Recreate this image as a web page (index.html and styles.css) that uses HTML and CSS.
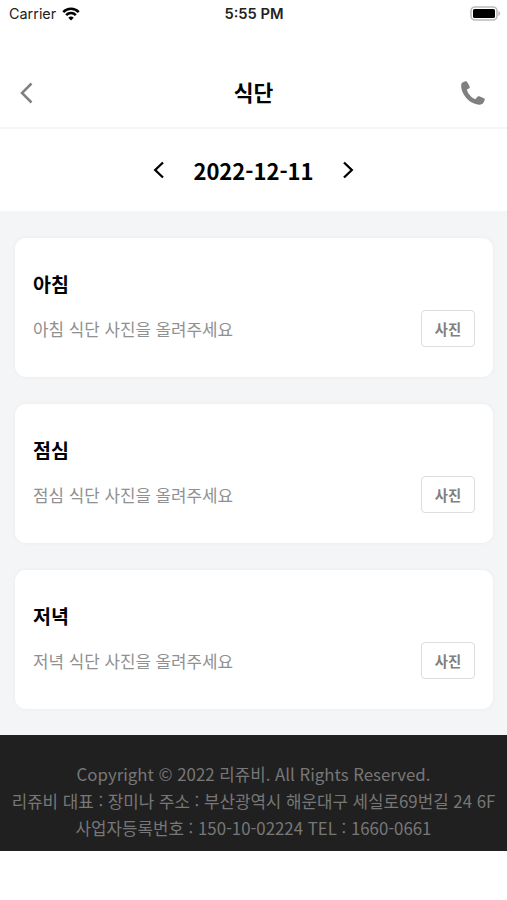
FILE: index.html
```html
<!DOCTYPE html>
<html lang="ko">
<head>
<meta charset="utf-8">
<title>식단</title>
<link rel="stylesheet" href="styles.css">
</head>
<body>
<div class="status">
  <div class="carrier"><span>Carrier</span>
    <svg width="18" height="14" viewBox="0 0 20 15" fill="none" stroke="#000" stroke-width="2.8"><path d="M1.400 5.400a12 12 0 0 1 17.200 0M4.600 8.800a7.500 7.500 0 0 1 10.800 0"/><path d="M10 14.800l-3-3.100a4.200 4.200 0 0 1 6 0z" fill="#000" stroke="none"/></svg>
  </div>
  <div class="time">5:55 PM</div>
  <svg class="battery" width="31" height="15" viewBox="0 0 31 15"><rect x="1" y="1" width="26" height="13" rx="4" fill="none" stroke="#bbb" stroke-width="1.600"/><rect x="3" y="3" width="22" height="9" rx="1.500" fill="#000"/><path d="M28.300 5v5c2.600-1 2.600-4 0-5z" fill="#bbb"/></svg>
</div>
<header class="header">
  <svg width="14" height="22" viewBox="0 0 14 22" fill="none" stroke="#808080" stroke-width="2.500"><path d="M11.500 1.500L2 11l9.500 9.500"/></svg>
  <h1>식단</h1>
  <svg class="phone" width="24" height="24" viewBox="0 0 24 24" fill="#808080"><path d="M1.500 1.600L3.800.5C5 0 5.700.2 6.300 1.300L8.500 5.300C9 6.300 8.800 6.800 8 7.400L5.900 8.500C6.200 11.700 10.500 17 14.400 18.200L16.200 16C16.800 15.200 17.400 15 18.300 15.300L22.900 17.300C23.900 17.800 24 18.400 23.600 19.300L22.500 21.600C21.900 22.900 20.500 23.700 18.300 23.700C9 23.400.2 13.800.2 4.800C.2 3.300.5 2.200 1.500 1.600z"/></svg>
</header>
<nav class="date">
  <svg width="12" height="18" viewBox="0 0 12 18"><path d="M10 1.500L2.200 9l7.800 7.500"/></svg>
  <span>2022-12-11</span>
  <svg width="12" height="18" viewBox="0 0 12 18"><path d="M2 1.500L9.800 9 2 16.500"/></svg>
</nav>
<main class="meals">
  <section class="card"><h2>아침</h2><div class="row"><p>아침 식단 사진을 올려주세요</p><button>사진</button></div></section>
  <section class="card"><h2>점심</h2><div class="row"><p>점심 식단 사진을 올려주세요</p><button>사진</button></div></section>
  <section class="card"><h2>저녁</h2><div class="row"><p>저녁 식단 사진을 올려주세요</p><button>사진</button></div></section>
</main>
<footer class="footer">
  <p>Copyright © 2022 리쥬비. All Rights Reserved.</p>
  <p>리쥬비 대표 : 장미나 주소 : 부산광역시 해운대구 세실로69번길 24 6F</p>
  <p>사업자등록번호 : 150-10-02224 TEL : 1660-0661</p>
</footer>
</body>
</html>
```

FILE: styles.css
```css
* { box-sizing: border-box; margin: 0; padding: 0; }
body { background: #fff; font-family: "Noto Sans CJK KR", sans-serif; color: #000; width: 507px; height: 900px; overflow: hidden; }
svg { display: block; flex: none; }
.status { height: 27px; display: grid; grid-template-columns: 1fr auto 1fr; align-items: center; padding: 0 6px 0 9px; font: 14.4px/27px Inter, sans-serif; color: #222; }
.carrier { display: flex; align-items: center; gap: 6px; margin-top: -1px; }
.time { font-weight: 600; font-size: 14.7px; margin: 1px 2px 0 0; }
.battery { justify-self: end; margin-top: -2px; }
.header { height: 102px; padding: 31px 22px 0 20px; display: grid; grid-template-columns: 1fr auto 1fr; align-items: center; border-bottom: 2px solid #f5f5f5; }
.header h1 { font-size: 21.500px; line-height: 32px; font-weight: 700; padding: 0 0 1px 2px; }
.phone { justify-self: end; }
.date { height: 82px; display: flex; align-items: center; justify-content: center; gap: 28px; font-size: 22px; font-weight: 700; }
.date svg { fill: none; stroke: #000; stroke-width: 2.3; }
.meals { height: 524px; padding: 27px 14px 0 15px; background: #f3f5f7; display: flex; flex-direction: column; gap: 27px; }
.card { height: 139px; padding: 30px 18px 0 18px; background: #fff; border-radius: 11px; box-shadow: 0 0 5px #0000000b; }
.card h2 { font-size: 19.500px; line-height: 32px; font-weight: 700; }
.row { display: flex; align-items: center; justify-content: space-between; margin-top: 10px; }
.row p { font-size: 16.850px; line-height: 24px; padding-top: 1px; color: #909090; }
.row button { width: 54px; height: 37px; padding-top: 1px; border: 1px solid #ddd; border-radius: 4px; background: #fff; color: #808080; font: 700 14.300px/20px "Noto Sans CJK KR", sans-serif; }
.footer { height: 116px; padding-top: 25px; background: #202020; color: #777; text-align: center; font-size: 16.820px; line-height: 27px; white-space: nowrap; }
```
